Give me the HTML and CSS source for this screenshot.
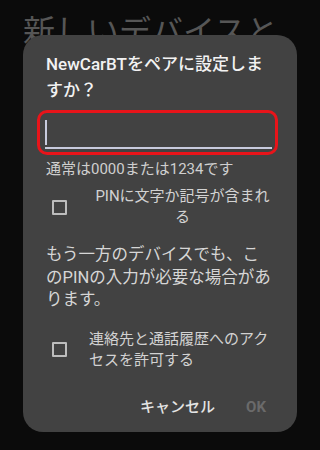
FILE: index.html
```html
<!DOCTYPE html>
<html lang="ja">
<head>
<meta charset="utf-8">
<link rel="stylesheet" href="styles.css">
</head>
<body>
<div class="screen">
  <h1 class="bg-title">新しいデバイスとペア設定</h1>
  <div class="dialog">
    <div class="title">NewCarBTをペアに設定しますか？</div>
    <div class="pin-box">
      <div class="pin-input"><span class="cursor"></span></div>
    </div>
    <div class="hint">通常は0000または1234です</div>
    <div class="check-row">
      <span class="check-cell"><span class="checkbox"></span></span>
      <span class="check-label centered">PINに文字か記号が含まれる</span>
    </div>
    <p class="message">もう一方のデバイスでも、このPINの入力が必要な場合があります。</p>
    <div class="check-row second">
      <span class="check-cell"><span class="checkbox"></span></span>
      <span class="check-label">連絡先と通話履歴へのアクセスを許可する</span>
    </div>
    <div class="actions">
      <span class="btn">キャンセル</span>
      <span class="btn disabled">OK</span>
    </div>
  </div>
</div>
</body>
</html>
```
FILE: styles.css
```css
html, body {
  margin: 0;
  padding: 0;
  background: #0b0b0b;
}
.screen {
  position: relative;
  width: 320px;
  height: 450px;
  overflow: hidden;
  font-family: Roboto, "Noto Sans CJK JP", sans-serif;
}
.bg-title {
  margin: 0;
  padding: 14px 23px 0 23px;
  width: 274px;
  font-size: 32px;
  line-height: 36px;
  font-weight: 400;
  color: #565656;
}
.dialog {
  position: absolute;
  left: 23px;
  top: 35px;
  width: 274px;
  height: 397px;
  box-sizing: border-box;
  padding: 16px 23px 0 23px;
  background: #424242;
  border-radius: 20px;
  display: flex;
  flex-direction: column;
}
.title {
  font-size: 17px;
  line-height: 26px;
  font-weight: 500;
  color: #f2f2f2;
}
.pin-box {
  margin: 7px -4px 0 -9px;
  border: 3px solid #e8141a;
  border-radius: 10px;
  padding: 7px 3px 3px 5px;
}
.pin-input {
  height: 27px;
  border-bottom: 2px solid #c7cadd;
}
.cursor {
  display: block;
  width: 2px;
  height: 25px;
  background: #c7cadd;
}
.hint {
  margin-top: 4px;
  font-size: 15px;
  line-height: 20px;
  color: #cfcfcf;
}
.check-row {
  margin-top: 7px;
  display: flex;
  align-items: center;
}
.check-row.second {
  margin-top: 17px;
}
.check-cell {
  width: 43px;
  flex: none;
  display: flex;
  align-items: center;
}
.checkbox {
  margin-left: 6px;
  width: 11px;
  height: 11px;
  border: 2px solid #bdbdbd;
  border-radius: 1px;
}
.check-label {
  flex: 1;
  margin-right: -2px;
  font-size: 15px;
  line-height: 21px;
  color: #d2d2d2;
}
.check-label.centered {
  text-align: center;
}
.message {
  margin: 16px 0 0 0;
  font-size: 16.5px;
  line-height: 22.5px;
  color: #d6d6d6;
}
.actions {
  margin-top: auto;
  margin-bottom: 15px;
  display: flex;
  justify-content: flex-end;
  align-items: center;
  gap: 31px;
}
.btn {
  font-size: 15px;
  line-height: 20px;
  font-weight: 500;
  color: #e4e4e4;
}
.btn.disabled {
  margin-right: 8px;
  font-weight: 700;
  color: #6a6a6a;
}
```
